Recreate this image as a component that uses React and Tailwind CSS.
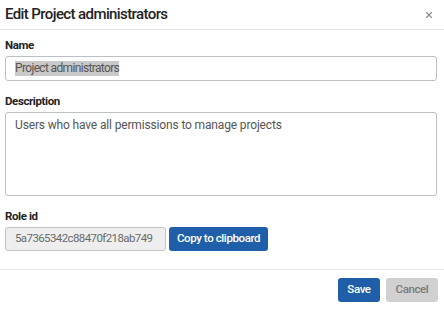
import { X } from 'lucide-react';

const ROLE_ID = '5a7365342c88470f218ab749';

const labelCls = 'block text-[11.5px] font-bold leading-[14px] tracking-[-0.4px] text-[#222]';
const fieldCls = 'w-full rounded-[3px] border border-[#b9c0c6] bg-white px-[9px] text-[#555]';

export default function App() {
  return (
    <div className="h-[309px] w-[444px] bg-white font-['Roboto',sans-serif] text-[#222]">
      {/* Header */}
      <div className="flex h-[30px] items-center justify-between border-b border-[#e8e8e8] pl-[5px] pr-[10px]">
        <h1 className="text-[15px] font-medium leading-none tracking-[-0.6px] text-[#222]">
          Edit Project administrators
        </h1>
        <button type="button" className="text-[#8a8a8a]">
          <X size={10} strokeWidth={2.75} />
        </button>
      </div>

      {/* Body */}
      <div className="pb-[18px] pl-[5px] pr-[7px] pt-[8px]">
        <label className={labelCls}>Name</label>
        <div className={`${fieldCls} mt-[4px] flex h-[25px] items-center text-[12px] tracking-[-0.65px]`}>
          <span className="bg-[#c9c9c9] leading-[15px]">Project administrators</span>
        </div>

        <label className={`${labelCls} mt-[13px]`}>Description</label>
        <div className={`${fieldCls} mt-[4px] h-[84px] pt-[5px] text-[12px] leading-[15px] tracking-[-0.15px]`}>
          Users who have all permissions to manage projects
        </div>

        <label className={`${labelCls} mt-[13px]`}>Role id</label>
        <div className="mt-[4px] flex items-center gap-[3px]">
          <div className="flex h-[24px] w-[161px] items-center rounded-[3px] border border-[#c4c4c4] bg-[#eeeeee] px-[9px] text-[11.5px] tracking-[-0.6px] text-[#6a6a6a]">
            {ROLE_ID}
          </div>
          <button
            type="button"
            className="h-[24px] w-[99px] whitespace-nowrap rounded-[3px] bg-[#1f5fa9] text-[11.5px] font-medium tracking-[-0.4px] text-white"
          >
            Copy to clipboard
          </button>
        </div>
      </div>

      {/* Footer */}
      <div className="flex justify-end gap-[6px] border-t border-[#ededed] pr-[6px] pt-[8px]">
        <button
          type="button"
          className="h-[24px] w-[42px] rounded-[3px] bg-[#1f5fa9] text-[11.5px] font-medium tracking-[-0.4px] text-white"
        >
          Save
        </button>
        <button
          type="button"
          className="h-[24px] w-[52px] rounded-[3px] bg-[#d0d0d0] text-[11.5px] font-medium tracking-[-0.4px] text-[#7a7a7a]"
        >
          Cancel
        </button>
      </div>
    </div>
  );
}
